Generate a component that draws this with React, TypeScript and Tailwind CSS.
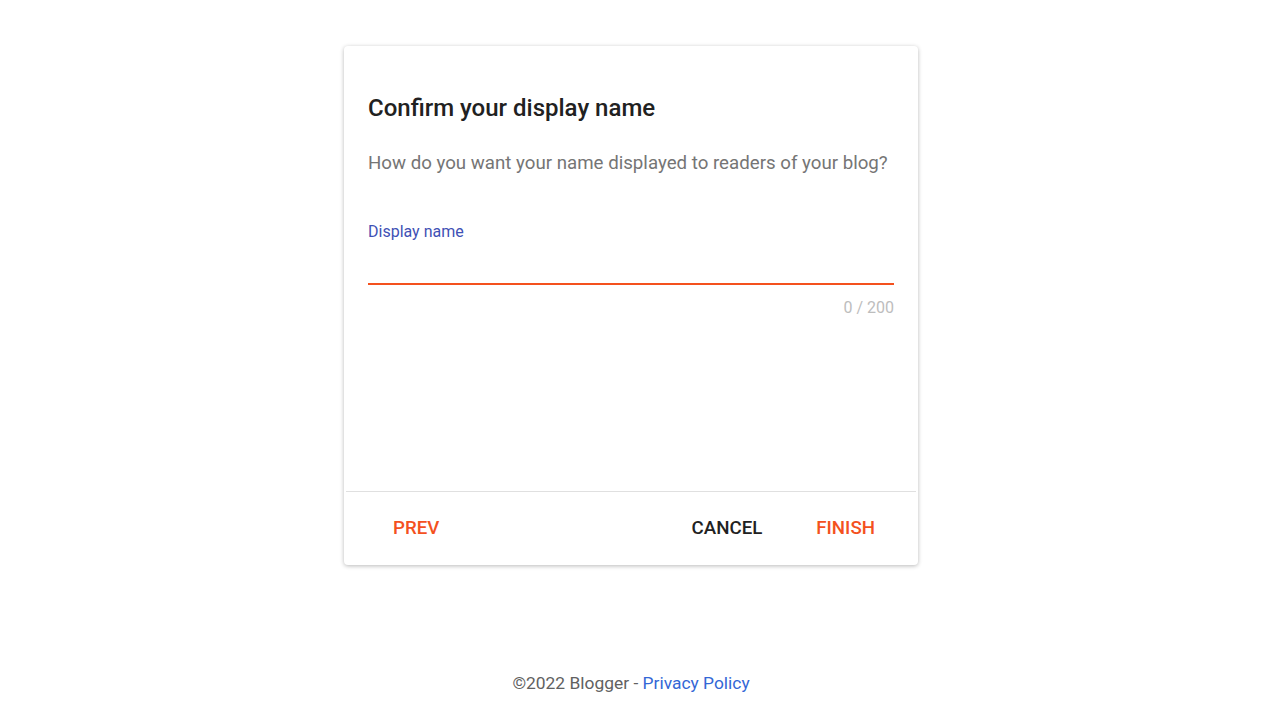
import { useState } from "react";

const DisplayNameCard = () => {
  const [name, setName] = useState("");

  return (
    <div className="w-[574px] h-[519px] bg-white rounded-[4px] shadow-[0_1px_4px_rgba(0,0,0,0.28)] flex flex-col">
      <div className="flex-1 px-[24px] flex flex-col">
        <h1 className="mt-[47px] text-[24px] leading-[30px] font-medium text-[#212121]">
          Confirm your display name
        </h1>
        <p className="mt-[28px] text-[18.7px] leading-[24px] text-[#757575]">
          How do you want your name displayed to readers of your blog?
        </p>
        <label className="mt-[47px] text-[16px] leading-[20px] text-[#3f51b5]">
          Display name
        </label>
        <input
          value={name}
          onChange={(e) => setName(e.target.value)}
          maxLength={200}
          className="h-[43px] w-full outline-none border-b-2 border-[#f4511e] text-[18px] text-[#212121] bg-transparent"
        />
        <div className="mt-[13px] text-right text-[16px] leading-[20px] text-[#bdbdbd]">
          {name.length} / 200
        </div>
      </div>

      <div className="mx-[2px] h-px bg-[#e0e0e0]" />

      <div className="h-[73px] flex items-center pl-[49px] pr-[43px] text-[18.7px] font-medium">
        <button className="uppercase text-[#f4511e]">Prev</button>
        <div className="flex-1" />
        <button className="uppercase text-[#212121]">Cancel</button>
        <button className="ml-[54px] uppercase text-[#f4511e]">Finish</button>
      </div>
    </div>
  );
};

export default function App() {
  return (
    <div className="min-h-[720px] bg-white font-['Roboto',sans-serif] flex flex-col items-center pt-[46px] pr-[18px]">
      <DisplayNameCard />
      <footer className="mt-[106px] text-[17.4px] leading-[24px] text-[#616161]">
        ©2022 Blogger -{" "}
        <a href="#" className="text-[#3367d6]">
          Privacy Policy
        </a>
      </footer>
    </div>
  );
}
